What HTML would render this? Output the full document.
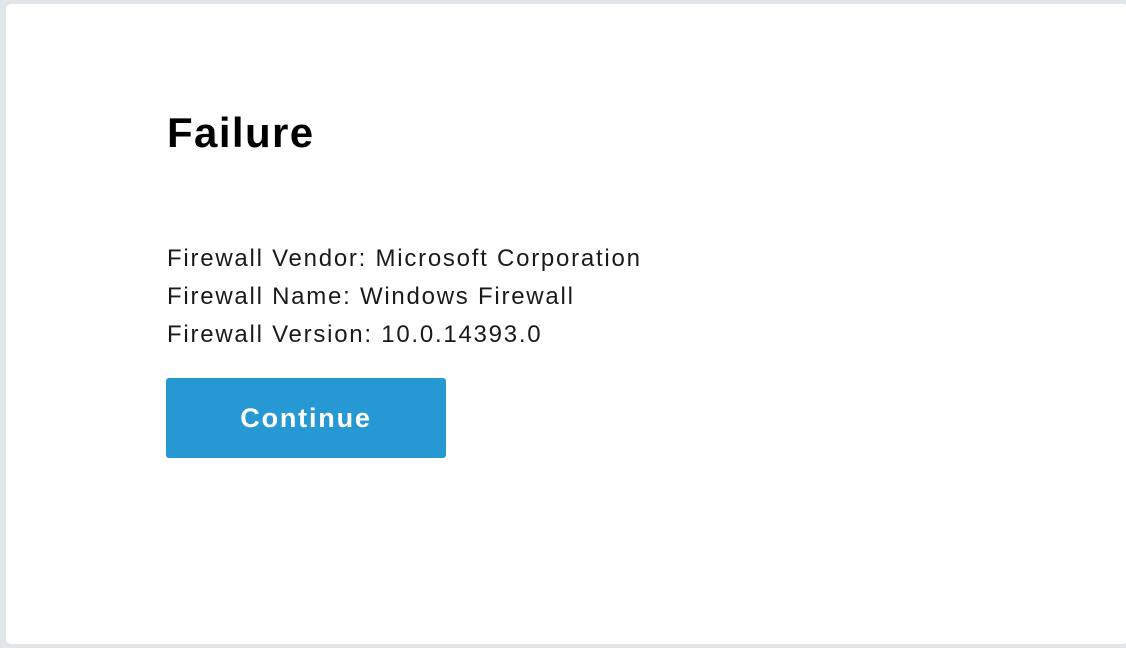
<!DOCTYPE html>
<html><head><style>
html,body{margin:0;padding:0;width:1126px;height:648px;background:#e3e6e9;overflow:hidden;font-family:"Liberation Sans",sans-serif;}
.card{position:absolute;left:6px;top:4px;width:1122px;height:640px;background:#fff;border-radius:5px;}
h1{position:absolute;left:167px;top:108px;margin:0;font-size:42px;font-weight:bold;color:#000;line-height:50px;letter-spacing:1.4px;}
.info{position:absolute;left:167px;top:240px;font-size:24px;line-height:38px;color:#1a1a1a;letter-spacing:1.75px;white-space:nowrap;}
.btn{position:absolute;left:166px;top:378px;width:280px;height:80px;background:#2699d4;border-radius:3px;color:#fff;font-size:27px;font-weight:bold;text-align:center;line-height:80px;letter-spacing:1.8px;}
</style></head><body>
<div class="card"></div>
<h1>Failure</h1>
<div class="info">Firewall Vendor: Microsoft Corporation<br>Firewall Name: Windows Firewall<br>Firewall Version: 10.0.14393.0</div>
<div class="btn">Continue</div>
</body></html>
